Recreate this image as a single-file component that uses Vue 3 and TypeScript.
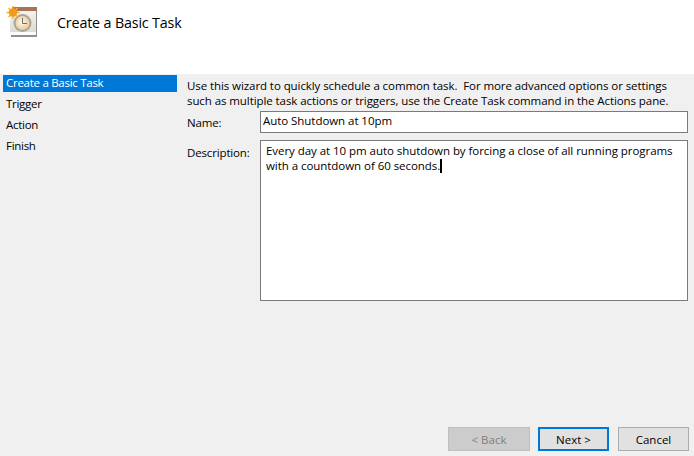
<script setup lang="ts">
const steps: string[] = ['Create a Basic Task', 'Trigger', 'Action', 'Finish']
</script>

<template>
  <div class="wizard">
    <header class="head">
      <svg class="logo" width="40" height="40" viewBox="0 0 40 40">
        <defs>
          <linearGradient id="pg" x1="0" y1="0" x2="0" y2="1">
            <stop offset="0" stop-color="#f6f4ee" />
            <stop offset="1" stop-color="#dcd8cf" />
          </linearGradient>
          <radialGradient id="fc" cx="0.45" cy="0.45" r="0.6">
            <stop offset="0" stop-color="#fdfaf0" />
            <stop offset="1" stop-color="#e8c88e" />
          </radialGradient>
        </defs>
        <rect x="11" y="9" width="26" height="28" fill="#8f8f8f" />
        <rect x="10" y="9" width="26" height="26" fill="url(#pg)" />
        <rect x="12" y="7" width="25" height="4" fill="#a9735a" />
        <rect x="10" y="32" width="26" height="3" fill="#fbfbfb" />
        <circle cx="22.5" cy="23" r="9" fill="#a6a6a0" />
        <circle cx="22.5" cy="23" r="7" fill="url(#fc)" />
        <path d="M22.5 18V23.5H27" fill="none" stroke="#6d6d6d" stroke-width="1" />
        <g stroke="#f7b32b" stroke-width="1.4">
          <path d="M13 6V19M6.5 12.5H19.5M8.5 8L17.5 17M17.5 8L8.5 17" />
        </g>
        <circle cx="13" cy="12.5" r="4.2" fill="#f59a17" />
      </svg>
      <h1 class="title">Create a Basic Task</h1>
    </header>

    <div class="body">
      <ul class="steps">
        <li v-for="(s, i) in steps" :key="s" class="step" :class="{ on: i === 0 }">{{ s }}</li>
      </ul>

      <main class="form">
        <p class="intro">Use this wizard to quickly schedule a common task.&nbsp; For more advanced options or settings<br />such as multiple task actions or triggers, use the Create Task command in the Actions pane.</p>
        <div class="row name-row">
          <label class="lab">Name:</label>
          <div class="field name">Auto Shutdown at 10pm</div>
        </div>
        <div class="row desc-row">
          <label class="lab">Description:</label>
          <div class="field desc">Every day at 10 pm auto shutdown by forcing a close of all running programs<br />with a countdown of 60 seconds.<span class="caret"></span></div>
        </div>
      </main>
    </div>

    <footer class="foot">
      <button class="btn back" disabled>&lt; Back</button>
      <button class="btn next">Next &gt;</button>
      <button class="btn cancel">Cancel</button>
    </footer>
  </div>
</template>

<style>
html, body { margin: 0; background: #f0f0f0; }
</style>

<style scoped>
.wizard {
  width: 694px;
  height: 456px;
  display: flex;
  flex-direction: column;
  background: #f0f0f0;
  color: #000;
  font-family: "Open Sans", "Noto Sans", sans-serif;
  font-size: 11.5px;
  overflow: hidden;
}
.head {
  height: 74px;
  flex: none;
  box-sizing: border-box;
  background: #fff;
  display: flex;
  align-items: flex-start;
}
.logo { flex: none; }
.title {
  margin: 12px 0 0 17px;
  font-size: 14.3px;
  font-weight: 400;
  line-height: 22px;
  letter-spacing: -0.16px;
}
.body { flex: 1; display: flex; min-height: 0; }
.steps {
  list-style: none;
  margin: 1px 0 0 3px;
  padding: 0;
  width: 174px;
  flex: none;
  letter-spacing: -0.28px;
}
.step {
  height: 17px;
  line-height: 15px;
  padding-left: 3px;
  margin-bottom: 4px;
}
.step.on { background: #0078d7; color: #fff; }
.form { margin-left: 10px; flex: 1; min-width: 0; }
.intro {
  margin: 0;
  padding-top: 4px;
  line-height: 15px;
  height: 33px;
  white-space: nowrap;
  letter-spacing: -0.08px;
}
.row { display: flex; }
.lab { width: 73px; flex: none; letter-spacing: -0.15px; }
.name-row { height: 22px; align-items: center; margin-bottom: 7px; }
.desc-row .lab { padding-top: 5px; line-height: 15px; }
.field {
  box-sizing: border-box;
  width: 428px;
  background: #fff;
  border: 1px solid #7a7a7a;
  white-space: nowrap;
  letter-spacing: -0.05px;
}
.name { height: 22px; line-height: 18px; padding-left: 2px; }
.desc { height: 161px; padding: 2px 0 0 5px; line-height: 15px; }
.caret {
  display: inline-block;
  width: 1px;
  height: 14px;
  background: #000;
  vertical-align: text-bottom;
  border-left: 1px solid #000;
}
.foot {
  flex: none;
  height: 29px;
  display: flex;
  align-items: flex-start;
  padding-left: 448px;
}
.btn {
  box-sizing: border-box;
  height: 24px;
  width: 71px;
  padding: 0;
  background: #e1e1e1;
  border: 1px solid #adadad;
  font: inherit;
  color: #000;
}
.back { width: 82px; background: #cccccc; border-color: #bfbfbf; color: #7f7f7f; }
.next { margin-left: 8px; border: 2px solid #0078d7; }
.cancel { margin-left: 9px; }
</style>
